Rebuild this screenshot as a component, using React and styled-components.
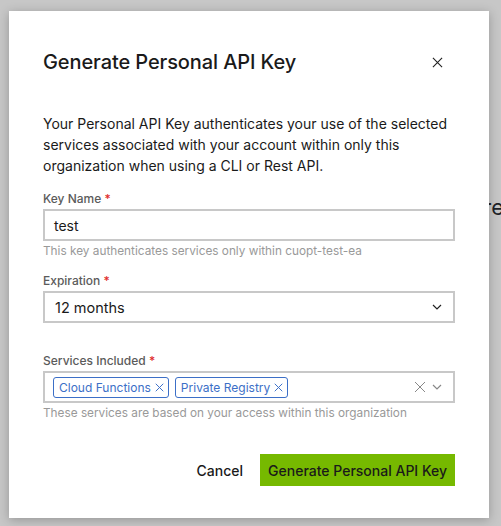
import React from 'react';
import styled, { createGlobalStyle } from 'styled-components';

const GlobalStyle = createGlobalStyle`
  html, body {
    margin: 0;
    padding: 0;
    background: #c7c7c7;
    font-family: Inter, "Liberation Sans", sans-serif;
    overflow: hidden;
  }
`;

/* page behind the modal, only its tail shows */
const Page = styled.div`
  position: relative;
  width: 501px;
  height: 526px;
  overflow: hidden;
`;

const BackHeading = styled.h1`
  margin: 0 -3px 0 0;
  padding-top: 194px;
  text-align: right;
  font-size: 22px;
  line-height: 26px;
  font-weight: 400;
  color: #1c2228;
  white-space: nowrap;
`;

const Modal = styled.div`
  position: absolute;
  left: 9px;
  top: 11px;
  width: 480px;
  height: 507px;
  box-sizing: border-box;
  background: #fff;
  padding: 0 34px;
  box-shadow: 0 2px 10px rgba(0, 0, 0, 0.25);
  display: flex;
  flex-direction: column;
`;

const Header = styled.div`
  display: flex;
  align-items: center;
  justify-content: space-between;
  height: 28px;
  margin-top: 37px;
`;

const Title = styled.h2`
  margin: 0;
  font-size: 20px;
  font-weight: 500;
  color: #1a1a1a;
  letter-spacing: -0.1px;
`;

const CloseButton = styled.button`
  border: 0;
  background: none;
  padding: 0;
  width: 11px;
  height: 11px;
  margin-right: 12px;
  display: flex;
  cursor: pointer;
`;

const Intro = styled.p`
  margin: 37px 0 0;
  font-size: 14px;
  line-height: 21px;
  color: #1a1a1a;
`;

const Field = styled.div`
  display: flex;
  flex-direction: column;
  margin-top: ${p => p.$top}px;
`;

const Label = styled.label`
  font-size: 12px;
  font-weight: 500;
  color: #5b5b5b;
  line-height: 16px;
  margin-bottom: 2px;
  span { color: #e02c2c; }
`;

const Box = styled.div`
  height: 32px;
  box-sizing: border-box;
  border: 2px solid #c8c8c8;
  display: flex;
  align-items: center;
  padding: 0 ${p => p.$pad || 9}px;
  font-size: 14px;
  color: #1a1a1a;
`;

const Value = styled.span`
  flex: 1;
  font-size: ${p => p.$size || 14}px;
`;

const Help = styled.div`
  font-size: 11.8px;
  line-height: 14px;
  color: #999;
  margin-top: 3px;
`;

const Chips = styled.div`
  flex: 1;
  display: flex;
  gap: 6px;
`;

const Chip = styled.span`
  display: inline-flex;
  align-items: center;
  gap: 4px;
  height: 21px;
  box-sizing: border-box;
  padding: 0 4px 0 5px;
  border: 1px solid #3c6fc7;
  border-radius: 3px;
  color: #3c6fc7;
  font-size: 12px;
`;

const Controls = styled.div`
  display: flex;
  align-items: center;
  gap: 6px;
  margin-right: ${p => p.$right || 3}px;
`;

const Footer = styled.div`
  display: flex;
  justify-content: flex-end;
  align-items: center;
  gap: 17px;
  margin-top: 34px;
`;

const TextButton = styled.button`
  border: 0;
  background: none;
  padding: 0;
  font-family: inherit;
  font-size: 14px;
  font-weight: 500;
  color: #1a1a1a;
`;

const PrimaryButton = styled.button`
  border: 0;
  background: #76b900;
  height: 32px;
  padding: 0 8px;
  font-family: inherit;
  font-size: 14px;
  font-weight: 500;
  color: #1a1a1a;
`;

const Cross = ({ size = 12, color = '#222', w = 1.2 }) => (
  <svg width={size} height={size} viewBox="0 0 12 12">
    <path d="M1 1L11 11M11 1L1 11" stroke={color} strokeWidth={w} fill="none" />
  </svg>
);

const Chevron = ({ color = '#222' }) => (
  <svg width="10" height="6" viewBox="0 0 10 6">
    <path d="M1 1L5 5L9 1" stroke={color} strokeWidth="1.2" fill="none" />
  </svg>
);

export default function App() {
  return (
    <Page>
      <GlobalStyle />
      <BackHeading>Software</BackHeading>
      <Modal>
        <Header>
          <Title>Generate Personal API Key</Title>
          <CloseButton><Cross size={11} /></CloseButton>
        </Header>
        <Intro>
          Your Personal API Key authenticates your use of the selected services associated with your account within only this organization when using a CLI or Rest API.
        </Intro>
        <Field $top={15}>
          <Label>Key Name <span>*</span></Label>
          <Box>
            <Value>test</Value>
          </Box>
          <Help>This key authenticates services only within cuopt-test-ea</Help>
        </Field>
        <Field $top={15}>
          <Label>Expiration <span>*</span></Label>
          <Box $pad={10}>
            <Value $size={14.5}>12 months</Value>
            <Controls $right={1}><Chevron /></Controls>
          </Box>
        </Field>
        <Field $top={30}>
          <Label>Services Included <span>*</span></Label>
          <Box $pad={8}>
            <Chips>
              <Chip>Cloud Functions <Cross size={9} color="#3c6fc7" w={1.3} /></Chip>
              <Chip>Private Registry <Cross size={9} color="#3c6fc7" w={1.3} /></Chip>
            </Chips>
            <Controls $right={3}>
              <Cross size={12} color="#888" w={1} />
              <Chevron color="#888" />
            </Controls>
          </Box>
          <Help>These services are based on your access within this organization</Help>
        </Field>
        <Footer>
          <TextButton>Cancel</TextButton>
          <PrimaryButton>Generate Personal API Key</PrimaryButton>
        </Footer>
      </Modal>
    </Page>
  );
}
